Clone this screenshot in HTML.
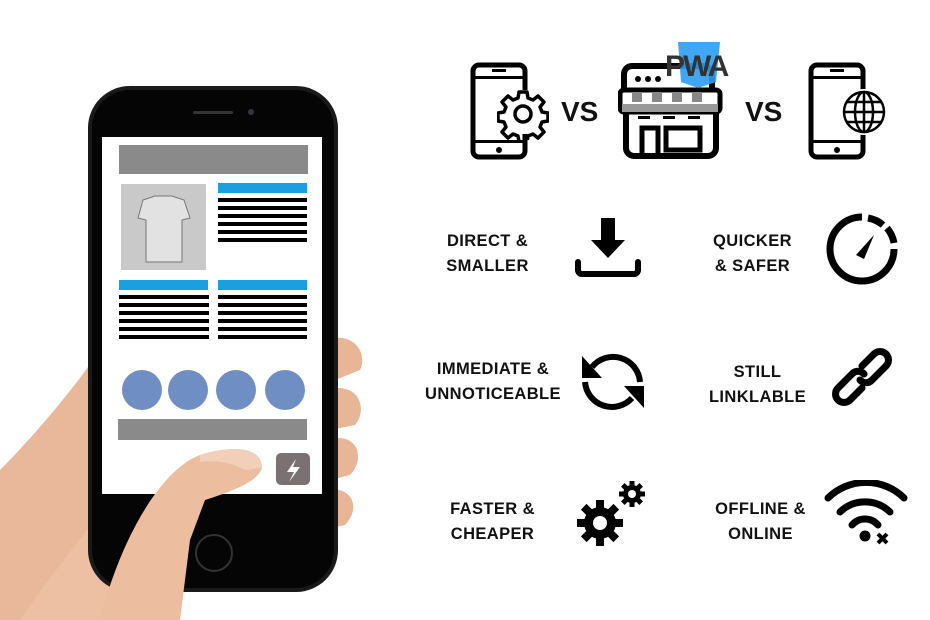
<!DOCTYPE html>
<html><head><style>
body{margin:0;width:930px;height:620px;background:#fff;position:relative;overflow:hidden;font-family:"Liberation Sans",sans-serif}
.a{position:absolute}
.t{position:absolute;font-weight:bold;font-size:16.5px;line-height:25px;text-align:center;color:#111;letter-spacing:0.4px}
.vs{position:absolute;font-weight:bold;font-size:28px;color:#111}
</style></head><body>
<!-- hand -->
<svg class="a" style="left:0;top:0" width="420" height="620">
<path d="M0 470 C40 430 80 380 100 350 L130 330 L130 620 L0 620Z" fill="#e9b89a"/>
<path d="M20 620 C60 560 100 520 120 480 L200 450 C240 440 250 460 245 475 C230 490 200 505 170 520 L180 560 L170 620Z" fill="#edc0a3"/>
<path d="M325 340 C355 330 368 355 360 370 L335 380Z M325 390 C360 380 368 410 355 425 L330 430Z M325 440 C360 430 365 460 350 475 L330 480Z M325 490 C355 485 360 510 345 525 L330 528Z" fill="#e8b596"/>
<rect x="88" y="86" width="250" height="506" rx="42" fill="#1a1a1a"/>
<rect x="92" y="90" width="242" height="498" rx="38" fill="#050505"/>
<rect x="102" y="137" width="220" height="357" fill="#fff"/>
<rect x="193" y="111" width="40" height="3" rx="1.5" fill="#333"/>
<circle cx="251" cy="112" r="3" fill="#334"/>
<circle cx="214" cy="553" r="18" fill="none" stroke="#333" stroke-width="2"/>
<rect x="119" y="145" width="189" height="29" fill="#8a8a8a"/>
<rect x="121" y="184" width="85" height="86" fill="#c9c9c9"/>
<path d="M143 200 L155 196 L172 196 L184 200 L190 218 L182 220 L182 262 L146 262 L146 220 L138 218Z" fill="#e2e2e2" stroke="#777"/>
<rect x="218" y="183" width="89" height="10" fill="#1aa0e0"/>
<g fill="#000"><rect x="218" y="198" width="89" height="4"/><rect x="218" y="206" width="89" height="4"/><rect x="218" y="214" width="89" height="4"/><rect x="218" y="222" width="89" height="4"/><rect x="218" y="230" width="89" height="4"/><rect x="218" y="238" width="89" height="4"/></g>
<rect x="119" y="280" width="89" height="10" fill="#1aa0e0"/>
<rect x="218" y="280" width="89" height="10" fill="#1aa0e0"/>
<g fill="#000"><rect x="119" y="295" width="90" height="4"/><rect x="119" y="303" width="90" height="4"/><rect x="119" y="311" width="90" height="4"/><rect x="119" y="319" width="90" height="4"/><rect x="119" y="327" width="90" height="4"/><rect x="119" y="335" width="90" height="4"/>
<rect x="218" y="295" width="89" height="4"/><rect x="218" y="303" width="89" height="4"/><rect x="218" y="311" width="89" height="4"/><rect x="218" y="319" width="89" height="4"/><rect x="218" y="327" width="89" height="4"/><rect x="218" y="335" width="89" height="4"/></g>
<g fill="#6f8fc4"><circle cx="142" cy="390" r="20"/><circle cx="188" cy="390" r="20"/><circle cx="236" cy="390" r="20"/><circle cx="285" cy="390" r="20"/></g>
<rect x="118" y="419" width="189" height="21" fill="#8a8a8a"/>
<rect x="276" y="453" width="34" height="32" rx="5" fill="#7a7272"/>
<path d="M296 459 L287 472 L294 472 L289 482 L300 467 L293 467Z" fill="#fff"/>
<path d="M100 620 C120 540 160 470 200 455 C240 443 262 450 262 468 C258 482 230 492 205 500 L190 540 L180 620Z" fill="#ecbd9f"/>
<path d="M200 455 C240 443 262 450 262 468 L245 470 C230 462 215 460 200 462Z" fill="#f2cfb8"/>
</svg>
<!-- top row -->
<svg class="a" style="left:470px;top:62px" width="60" height="98"><rect x="3" y="3" width="52" height="92" rx="6" fill="none" stroke="#000" stroke-width="5"/><rect x="3" y="14" width="52" height="3" fill="#000"/><rect x="3" y="78" width="52" height="3" fill="#000"/><rect x="22" y="7" width="14" height="3" fill="#000"/><circle cx="29" cy="88" r="3" fill="#000"/><rect x="35" y="28" width="44" height="44" fill="#fff"/></svg>
<svg class="a" style="left:497px;top:88px" width="52" height="52" viewBox="0 0 52 52"><g fill="none" stroke="#000" stroke-width="3.5" stroke-linejoin="round"><path d="M22 4h8l1 6 5 2 5-4 6 6-4 5 2 5 6 1v8l-6 1-2 5 4 5-6 6-5-4-5 2-1 6h-8l-1-6-5-2-5 4-6-6 4-5-2-5-6-1v-8l6-1 2-5-4-5 6-6 5 4 5-2z"/><circle cx="26" cy="26" r="8"/></g></svg>
<div class="vs" style="left:561px;top:96px">VS</div>
<svg class="a" style="left:618px;top:42px" width="120" height="118">
<rect x="6" y="24" width="88" height="40" rx="8" fill="#fff" stroke="#000" stroke-width="6"/>
<circle cx="20" cy="37" r="3" fill="#000"/><circle cx="30" cy="37" r="3" fill="#000"/><circle cx="40" cy="37" r="3" fill="#000"/>
<rect x="8" y="58" width="90" height="56" rx="8" fill="#fff" stroke="#000" stroke-width="6"/>
<rect x="2" y="48" width="100" height="22" rx="4" fill="#fff" stroke="#000" stroke-width="5"/>
<g fill="#888"><rect x="14" y="50" width="10" height="10"/><rect x="34" y="50" width="10" height="10"/><rect x="54" y="50" width="10" height="10"/><rect x="74" y="50" width="10" height="10"/></g>
<rect x="4" y="62" width="96" height="8" fill="#999"/>
<g fill="#000"><rect x="20" y="74" width="12" height="3"/><rect x="45" y="74" width="12" height="3"/><rect x="70" y="74" width="12" height="3"/></g>
<rect x="24" y="86" width="16" height="28" fill="none" stroke="#000" stroke-width="5"/>
<rect x="48" y="86" width="34" height="22" fill="none" stroke="#000" stroke-width="5"/>
<path d="M60 0 L102 0 L98 40 L80 46 L63 40Z" fill="#2a9df4" opacity="0.9"/>
<text x="47" y="34" font-family="Liberation Sans" font-weight="bold" font-size="30" fill="#333" letter-spacing="-2">PWA</text>
</svg>
<div class="vs" style="left:745px;top:96px">VS</div>
<svg class="a" style="left:808px;top:62px" width="80" height="98"><rect x="3" y="3" width="52" height="92" rx="6" fill="none" stroke="#000" stroke-width="5"/><rect x="3" y="14" width="52" height="3" fill="#000"/><rect x="3" y="78" width="52" height="3" fill="#000"/><rect x="22" y="7" width="14" height="3" fill="#000"/><circle cx="29" cy="88" r="3" fill="#000"/><circle cx="56" cy="50" r="23" fill="#fff"/>
<g fill="none" stroke="#000" stroke-width="2.5"><circle cx="56" cy="50" r="20"/><ellipse cx="56" cy="50" rx="9" ry="20"/><line x1="56" y1="30" x2="56" y2="70"/><line x1="36" y1="50" x2="76" y2="50"/><line x1="39" y1="40" x2="73" y2="40"/><line x1="39" y1="60" x2="73" y2="60"/></g></svg>
<!-- labels -->
<div class="t" style="left:410px;top:229px;width:155px">DIRECT &amp;<br>SMALLER</div>
<div class="t" style="left:675px;top:229px;width:155px">QUICKER<br>&amp; SAFER</div>
<div class="t" style="left:405px;top:357px;width:176px">IMMEDIATE &amp;<br>UNNOTICEABLE</div>
<div class="t" style="left:680px;top:360px;width:155px">STILL<br>LINKLABLE</div>
<div class="t" style="left:415px;top:497px;width:155px">FASTER &amp;<br>CHEAPER</div>
<div class="t" style="left:683px;top:497px;width:155px">OFFLINE &amp;<br>ONLINE</div>
<!-- icons -->
<svg class="a" style="left:575px;top:218px" width="66" height="60"><path d="M26 0h14v22h10L33 40 16 22h10z" fill="#000"/><path d="M3 44v8a4 4 0 0 0 4 4h52a4 4 0 0 0 4-4v-8" fill="none" stroke="#000" stroke-width="6" stroke-linecap="round"/></svg>
<svg class="a" style="left:826px;top:213px" width="72" height="72"><g fill="none" stroke="#000" stroke-width="7"><path d="M36 4 A32 32 0 1 0 68 36"/><path d="M42 5 A32 32 0 0 1 57 12"/><path d="M61 15 A32 32 0 0 1 68 30"/></g><path d="M30 42 L48 22 L38 46Z" fill="#000"/></svg>
<svg class="a" style="left:580px;top:350px" width="66" height="64"><g fill="none" stroke="#000" stroke-width="6"><path d="M60 32 A27 27 0 0 0 12 17"/><path d="M5 32 A27 27 0 0 0 52 48"/></g><path d="M2 6 L2 28 L22 28Z M64 36 L64 58 L44 36Z" fill="#000"/></svg>
<svg class="a" style="left:832px;top:348px" width="62" height="60"><g fill="none" stroke="#000" stroke-width="7" stroke-linecap="round"><path d="M30 18 L42 6 a8 8 0 0 1 12 12 L40 32 a8 8 0 0 1-12 0"/><path d="M30 40 L18 52 a8 8 0 0 1-12-12 L20 26 a8 8 0 0 1 12 0"/></g></svg>
<svg class="a" style="left:575px;top:478px" width="75" height="70"><g fill="#000"><circle cx="25" cy="45" r="16"/><g transform="translate(25 45)"><rect x="-4" y="-23" width="8" height="46"/><rect x="-4" y="-23" width="8" height="46" transform="rotate(45)"/><rect x="-4" y="-23" width="8" height="46" transform="rotate(90)"/><rect x="-4" y="-23" width="8" height="46" transform="rotate(135)"/></g><circle cx="57" cy="16" r="9"/><g transform="translate(57 16)"><rect x="-2.5" y="-13" width="5" height="26"/><rect x="-2.5" y="-13" width="5" height="26" transform="rotate(45)"/><rect x="-2.5" y="-13" width="5" height="26" transform="rotate(90)"/><rect x="-2.5" y="-13" width="5" height="26" transform="rotate(135)"/></g></g><circle cx="25" cy="45" r="7" fill="#fff"/><circle cx="57" cy="16" r="4" fill="#fff"/></svg>
<svg class="a" style="left:824px;top:480px" width="84" height="68"><g fill="none" stroke="#000" stroke-width="7" stroke-linecap="round"><path d="M4 18 A54 54 0 0 1 80 18"/><path d="M16 32 A36 36 0 0 1 66 32"/><path d="M28 45 A17 17 0 0 1 54 45"/></g><circle cx="41" cy="56" r="5.5" fill="#000"/><path d="M54 54 L63 63 M63 54 L54 63" stroke="#000" stroke-width="4"/></svg>
</body></html>
